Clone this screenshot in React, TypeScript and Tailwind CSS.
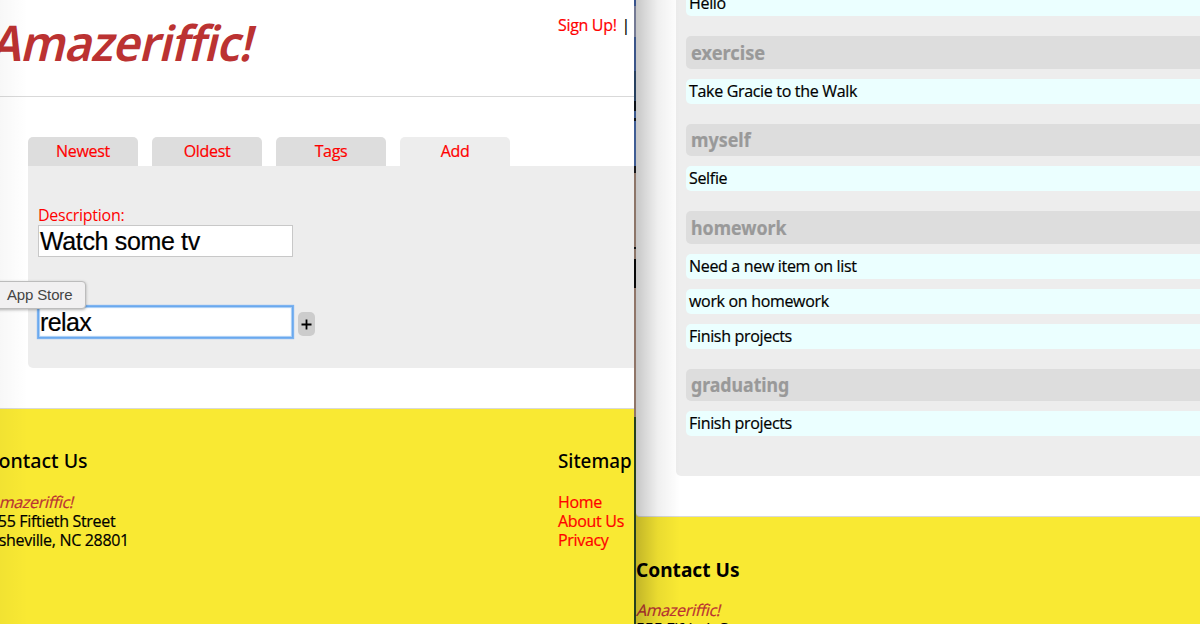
const body = "font-['Open_Sans','Noto_Sans',sans-serif]";

const groups = [
  { tag: "exercise", box: "h-[33px] pt-[5px]", scale: "scale-x-[0.91]", items: ["Take Gracie to the Walk"] },
  { tag: "myself", box: "h-[32px] pt-[4px]", scale: "scale-x-[0.895]", items: ["Selfie"] },
  { tag: "homework", box: "h-[33px] pt-[5px]", scale: "scale-x-[0.888]", items: ["Need a new item on list", "work on homework", "Finish projects"] },
  { tag: "graduating", box: "h-[32px] pt-[4px]", scale: "scale-x-[0.885]", items: ["Finish projects"] },
];

const tabs = [
  { label: "Newest", active: false },
  { label: "Oldest", active: false },
  { label: "Tags", active: false },
  { label: "Add", active: true },
];

function Item({ children }: { children: string }) {
  return (
    <li className="h-[25px] rounded-l-[5px] bg-[#ebffff] px-[3px] pt-[3px] text-black">
      {children}
    </li>
  );
}

function Brand() {
  return (
    <p className="text-[#bb3232]">
      <span className="inline-block origin-[0_15px] skew-x-[-14deg]">Amazeriffic!</span>
    </p>
  );
}

function EditorWindow() {
  return (
    <section className="relative flex w-[634px] shrink-0 flex-col overflow-hidden bg-white">
      <header className="flex h-[97px] shrink-0 justify-between border-b border-[#d9d9d9]">
        <h1 className="-ml-[11px] mt-[12px] origin-[0_49px] scale-x-[0.951] skew-x-[-14deg] font-['Noto_Sans',sans-serif] text-[49px] font-semibold leading-[60px] tracking-[-0.8px] text-[#bb3232] [-webkit-text-stroke:0]">
          Amazeriffic!
        </h1>
        <div className="mt-4 flex w-[76px] gap-[5px] whitespace-nowrap">
          <a className="text-[#ff0000]">Sign Up!</a>
          <span>|</span>
        </div>
      </header>
      <main className="ml-7 mt-10 h-[271px] shrink-0">
        <nav className="flex gap-[14px]">
          {tabs.map((tab) => (
            <a
              key={tab.label}
              className={
                tab.active
                  ? "h-[29px] w-[110px] rounded-t-[5px] bg-[#ededed] pt-[5px] text-center text-[#ff0000]"
                  : "h-[29px] w-[110px] rounded-t-[5px] bg-[#dddddd] pt-[5px] text-center text-[#ff0000]"
              }
            >
              {tab.label}
            </a>
          ))}
        </nav>
        <div className="h-[202px] rounded-bl-[5px] bg-[#ededed] pl-[10px] pt-10">
          <label className="block tracking-[-0.27px] text-[#ff0000] [-webkit-text-stroke:0]">Description:</label>
          <div className="h-[32px] w-[255px] border border-[#c8c8c8] bg-white pl-[1px] font-['Liberation_Sans',sans-serif] text-[25px] leading-[31px] tracking-[-0.35px] text-black">
            Watch some tv
          </div>
          <div className="mt-[49px] flex items-start gap-[5px]">
            <div className="h-[32px] w-[255px] bg-white pl-[2px] font-['Liberation_Sans',sans-serif] text-[25px] leading-[33px] tracking-[-0.6px] text-black shadow-[inset_0_0_0_1px_#6aa9ee,inset_0_0_1px_2px_#a5cbf5,0_0_1px_1px_#7db3f0]">
              relax
            </div>
            <button className="mt-[6px] flex h-6 w-[17px] items-center justify-center rounded-[5px] bg-[#cccccc]">
              <svg width="11" height="11" viewBox="0 0 11 11" className="stroke-black" strokeWidth="1.8">
                <path d="M5.5 0.5V10.5M0.5 5.5H10.5" />
              </svg>
            </button>
          </div>
        </div>
      </main>
      <footer className="flex flex-1 justify-between border-t border-[#d9d9d9] bg-[#f9e933]">
        <div className="-ml-[11px] pt-10">
          <h3 className="-ml-[3px] origin-left scale-x-[0.98] font-['Noto_Sans',sans-serif] text-[20px] font-medium leading-6 tracking-normal [-webkit-text-stroke:0]">Contact Us</h3>
          <div className="mt-5">
            <Brand />
            <p>555 Fiftieth Street</p>
            <p>Asheville, NC 28801</p>
          </div>
        </div>
        <div className="w-[76px] pt-10">
          <h3 className="origin-left scale-x-[0.94] font-['Noto_Sans',sans-serif] text-[20px] font-medium leading-6 tracking-normal [-webkit-text-stroke:0]">Sitemap</h3>
          <div className="mt-5 flex flex-col text-[#ff0000]">
            <a>Home</a>
            <a>About Us</a>
            <a>Privacy</a>
          </div>
        </div>
      </footer>
      <div className="absolute inset-y-0 left-0 w-7 bg-linear-to-r from-black/3 to-transparent" />
      <div className="absolute -left-2 top-[281px] h-[28px] w-[94px] rounded-[4px] border border-[#bcbcbc] bg-[#f1f0f1] pl-[14px] font-['Liberation_Sans',sans-serif] text-[15px] font-normal leading-[26px] tracking-[-0.15px] text-[#444444] shadow-[0_1px_3px_rgba(0,0,0,0.3)] [-webkit-text-stroke:0]">
        App Store
      </div>
    </section>
  );
}

function DesktopGap() {
  return (
    <div className="flex w-[2px] shrink-0 flex-col">
      <div className="h-[6px] bg-[#37538c]" />
      <div className="h-[31px] bg-[#747a94]" />
      <div className="h-[34px] bg-[#3a5488]" />
      <div className="h-[30px] bg-[#27405f]" />
      <div className="h-[10px] bg-[#0c1118]" />
      <div className="h-[7px] bg-[#3b598e]" />
      <div className="h-[3px] bg-[#0c1118]" />
      <div className="h-[45px] bg-[#3f5d94]" />
      <div className="h-[7px] bg-[#17171a]" />
      <div className="h-[74px] bg-[#8c7568]" />
      <div className="h-[2px] bg-[#111111]" />
      <div className="h-[10px] bg-[#8c7568]" />
      <div className="h-[29px] bg-[#080808]" />
      <div className="h-[129px] bg-[#8f7568]" />
      <div className="flex-1 bg-[#24401f]" />
    </div>
  );
}

function TagsWindow() {
  return (
    <section className="relative flex flex-1 flex-col overflow-hidden bg-[#f9e933]">
      <main className="h-[517px] shrink-0 overflow-hidden rounded-bl-[4px] border-b border-[#d9d9d9] bg-white pl-10">
        <div className="flow-root h-[476px] rounded-bl-[5px] bg-[#ededed] pl-[10px]">
          <ul className="-mt-[9px]">
            <Item>Hello</Item>
          </ul>
          {groups.map((group) => (
            <div key={group.tag} className="pt-5">
              <h3
                className={`${group.box} rounded-l-[5px] bg-[#dddddd] pl-[5px] font-['Noto_Sans',sans-serif] text-[20px] font-bold leading-6 tracking-normal text-[#999999]`}
              >
                <span className={`inline-block origin-left ${group.scale}`}>{group.tag}</span>
              </h3>
              <ul className="flex flex-col gap-[10px] pt-[10px]">
                {group.items.map((item) => (
                  <Item key={item}>{item}</Item>
                ))}
              </ul>
            </div>
          ))}
        </div>
      </main>
      <footer className="whitespace-nowrap pt-[41px]">
        <h3 className="origin-left scale-x-[0.955] font-['Noto_Sans',sans-serif] text-[20px] font-bold leading-6 tracking-normal [-webkit-text-stroke:0]">Contact Us</h3>
        <div className="mt-[19px]">
          <Brand />
          <p>555 Fiftieth Street</p>
        </div>
      </footer>
      <div className="absolute inset-y-0 left-0 w-11 bg-linear-to-r from-black/22 via-black/6 to-transparent" />
    </section>
  );
}

export default function App() {
  return (
    <div className={`${body} flex h-[624px] w-[1200px] overflow-hidden text-[16px] font-normal leading-[19px] tracking-[-0.32px] text-black [-webkit-text-stroke:0.2px]`}>
      <EditorWindow />
      <DesktopGap />
      <TagsWindow />
    </div>
  );
}
